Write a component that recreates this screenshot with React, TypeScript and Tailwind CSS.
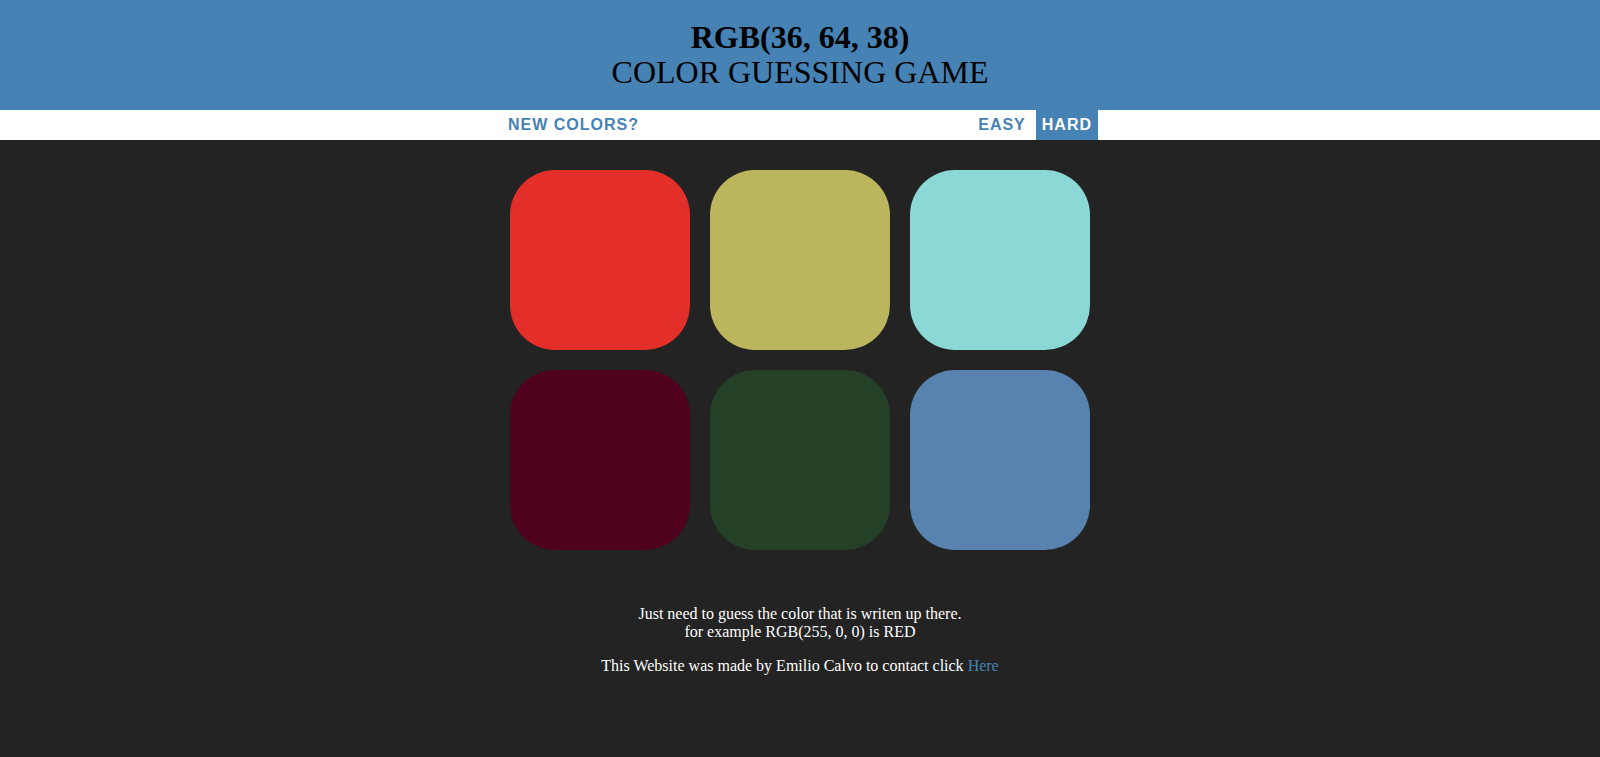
import React from 'react';

const squares = ['#e32e2a', '#bbb55e', '#8cd8d6', '#50011d', '#244026', '#5883ae'];

export default function App() {
  return (
    <div className="min-h-screen bg-[#232323] font-['Liberation_Serif',serif]">
      {/* header */}
      <h1 className="bg-[#4682b4] py-5 text-center text-[32px] font-normal leading-[1.1] text-black">
        <span className="font-bold">RGB(36, 64, 38)</span>
        <br />
        COLOR GUESSING GAME
      </h1>

      {/* stripe */}
      <div className="h-[30px] bg-white">
        <div className="mx-auto flex h-full w-[600px] items-center justify-between pr-0.5 font-['Liberation_Sans',Arial,sans-serif] text-base font-bold uppercase tracking-[1px] text-[#4682b4]">
          <button className="h-full bg-white pl-2 pr-1.5 uppercase">New Colors?</button>
          <div className="flex h-full gap-1">
            <button className="h-full bg-white px-1.5 uppercase">Easy</button>
            <button className="h-full bg-[#4682b4] px-1.5 uppercase text-white">Hard</button>
          </div>
        </div>
      </div>

      {/* squares */}
      <div className="mx-auto mt-5 grid w-[600px] grid-cols-3 gap-5 p-[10px]">
        {squares.map((c) => (
          <div key={c} className="h-[180px] w-[180px] rounded-[45px]" style={{ backgroundColor: c }} />
        ))}
      </div>

      {/* footer */}
      <div className="text-center text-base leading-[18px] text-white">
        <p className="mt-[45px]">
          Just need to guess the color that is writen up there.
          <br />
          for example RGB(255, 0, 0) is RED
        </p>
        <p className="mt-4">
          This Website was made by Emilio Calvo to contact click{' '}
          <a href="#" className="text-[#4682b4]">Here</a>
        </p>
      </div>
    </div>
  );
}
